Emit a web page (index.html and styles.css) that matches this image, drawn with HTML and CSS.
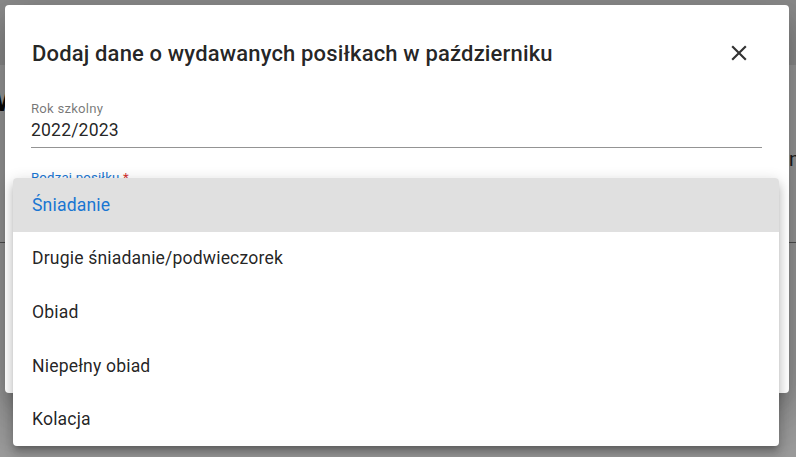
FILE: index.html
```html
<!DOCTYPE html>
<html lang="pl">
<head>
<meta charset="utf-8">
<link rel="stylesheet" href="styles.css">
</head>
<body>
<div class="page">
  <div class="page-header"></div>
  <div class="page-body">
    <span class="page-letter">W</span>
    <span class="page-letter-right">m</span>
  </div>
  <div class="page-line"></div>
</div>
<div class="backdrop"></div>
<div class="dialog">
  <div class="dialog-head">
    <h2 class="dialog-title">Dodaj dane o wydawanych posiłkach w październiku</h2>
    <svg class="close" width="26" height="26" viewBox="0 0 24 24"><path d="M19 6.41 17.59 5 12 10.59 6.41 5 5 6.41 10.59 12 5 17.59 6.41 19 12 13.41 17.59 19 19 17.59 13.41 12z" fill="#333"/></svg>
  </div>
  <div class="field">
    <div class="field-label">Rok szkolny</div>
    <div class="field-value">2022/2023</div>
  </div>
  <div class="field2">
    <div class="field-label blue">Rodzaj posiłku <span class="req">*</span></div>
  </div>
</div>
<ul class="menu">
  <li class="item selected">Śniadanie</li>
  <li class="item">Drugie śniadanie/podwieczorek</li>
  <li class="item">Obiad</li>
  <li class="item">Niepełny obiad</li>
  <li class="item">Kolacja</li>
</ul>
</body>
</html>
```
FILE: styles.css
```css
* { box-sizing: border-box; }
html, body { margin: 0; padding: 0; }
body {
  width: 796px; height: 457px; overflow: hidden;
  font-family: Roboto, "Liberation Sans", sans-serif;
  background: #fff;
  position: relative;
}
.page { width: 100%; height: 100%; display: flex; flex-direction: column; }
.page-header { height: 65px; background: #e8e8e8; flex: none; }
.page-body { flex: none; height: 177px; position: relative; background: #fff; }
.page-letter { position: absolute; left: -6px; top: 16px; font-size: 32px; font-weight: 500; color: #111; }
.page-letter-right { position: absolute; left: 789px; top: 82px; font-size: 20px; color: #333; }
.page-line { height: 1px; background: #888; }
.backdrop { position: absolute; inset: 0; background: rgba(0,0,0,0.4); }
.dialog {
  position: absolute; left: 5px; top: 5px; width: 784px; height: 388px;
  background: #fff; border-radius: 4px;
  box-shadow: 0 11px 15px -7px rgba(0,0,0,.2), 0 24px 38px 3px rgba(0,0,0,.14), 0 9px 46px 8px rgba(0,0,0,.12);
  padding: 0 27px 0 26px;
}
.dialog-head { display: flex; align-items: center; justify-content: space-between; height: 96px; padding-right: 10px; }
.dialog-title { margin: 0; font-size: 22px; font-weight: 500; color: rgba(0,0,0,0.87); letter-spacing: 0.16px; padding-left: 1px; }
.close { flex: none; }
.field { border-bottom: 1px solid #949494; padding-bottom: 4px; }
.field-label { font-size: 13.2px; color: rgba(0,0,0,0.55); line-height: 15px; letter-spacing: 0.2px; }
.field-value { font-size: 17.6px; color: rgba(0,0,0,0.87); line-height: 25px; margin-top: 2px; letter-spacing: 0.16px; }
.field2 { padding-top: 22px; }
.blue { color: #1976d2; }
.req { color: #d32f2f; }
.menu {
  position: absolute; left: 13px; top: 178px; width: 766px;
  margin: 0; padding: 0; list-style: none;
  background: #fff; border-radius: 4px; overflow: hidden;
  box-shadow: 0 5px 5px -3px rgba(0,0,0,.2), 0 8px 10px 1px rgba(0,0,0,.14), 0 3px 14px 2px rgba(0,0,0,.12);
}
.item { height: 53.6px; display: flex; align-items: center; padding-left: 19px; font-size: 17.6px; color: rgba(0,0,0,0.87); letter-spacing: 0.16px; }
.item.selected { background: #e0e0e0; color: #1976d2; }
```
